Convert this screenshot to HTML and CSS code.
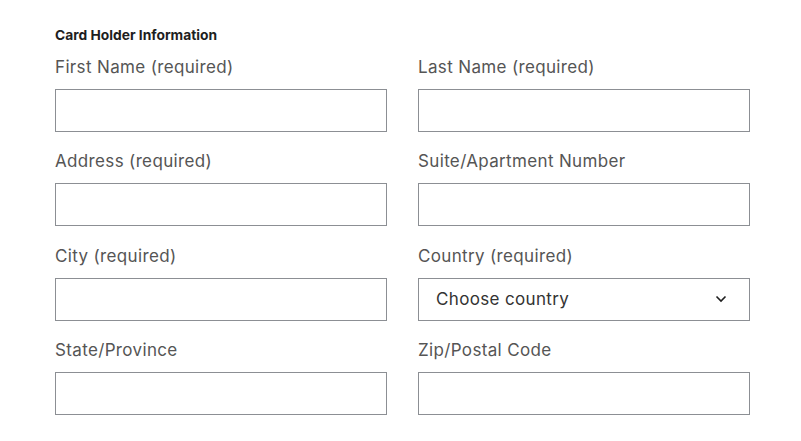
FILE: index.html
```html
<!DOCTYPE html>
<html>
<head>
<meta charset="utf-8">
<link rel="stylesheet" href="styles.css">
</head>
<body>
<form class="form">
  <h2 class="heading">Card Holder Information</h2>
  <div class="grid">
    <div class="field">
      <label class="label">First Name (required)</label>
      <div class="input"></div>
    </div>
    <div class="field">
      <label class="label">Last Name (required)</label>
      <div class="input"></div>
    </div>
    <div class="field">
      <label class="label">Address (required)</label>
      <div class="input"></div>
    </div>
    <div class="field">
      <label class="label">Suite/Apartment Number</label>
      <div class="input"></div>
    </div>
    <div class="field">
      <label class="label">City (required)</label>
      <div class="input"></div>
    </div>
    <div class="field">
      <label class="label">Country (required)</label>
      <div class="input select">
        <span class="select-text">Choose country</span>
        <svg class="chevron" width="12" height="8" viewBox="0 0 12 8"><path d="M1.5 1.5 L6 6 L10.5 1.5" fill="none" stroke="#1e1e1e" stroke-width="1.6"/></svg>
      </div>
    </div>
    <div class="field">
      <label class="label">State/Province</label>
      <div class="input"></div>
    </div>
    <div class="field">
      <label class="label">Zip/Postal Code</label>
      <div class="input"></div>
    </div>
  </div>
</form>
</body>
</html>
```
FILE: styles.css
```css
html, body {
  margin: 0;
  padding: 0;
  background: #ffffff;
}
body {
  font-family: Inter, "Noto Sans", sans-serif;
}
.form {
  padding: 25px 0 0 55px;
}
.heading {
  margin: 0 0 10px 0;
  font-size: 13.8px;
  line-height: 20px;
  font-weight: 700;
  color: #1e1e1e;
}
.grid {
  display: grid;
  grid-template-columns: 332px 332px;
  column-gap: 31px;
  row-gap: 17.3px;
}
.field {
  display: flex;
  flex-direction: column;
}
.label {
  font-size: 17px;
  line-height: 24px;
  letter-spacing: 0.35px;
  color: #555555;
  margin-bottom: 10px;
}
.input {
  box-sizing: border-box;
  height: 43px;
  border: 1px solid #8c8f94;
  background: #fff;
}
.select {
  display: flex;
  align-items: center;
  justify-content: space-between;
  padding: 0 22px 0 17px;
}
.select-text {
  font-size: 17px;
  letter-spacing: 0.35px;
  color: #333333;
}
.chevron {
  display: block;
}
```
